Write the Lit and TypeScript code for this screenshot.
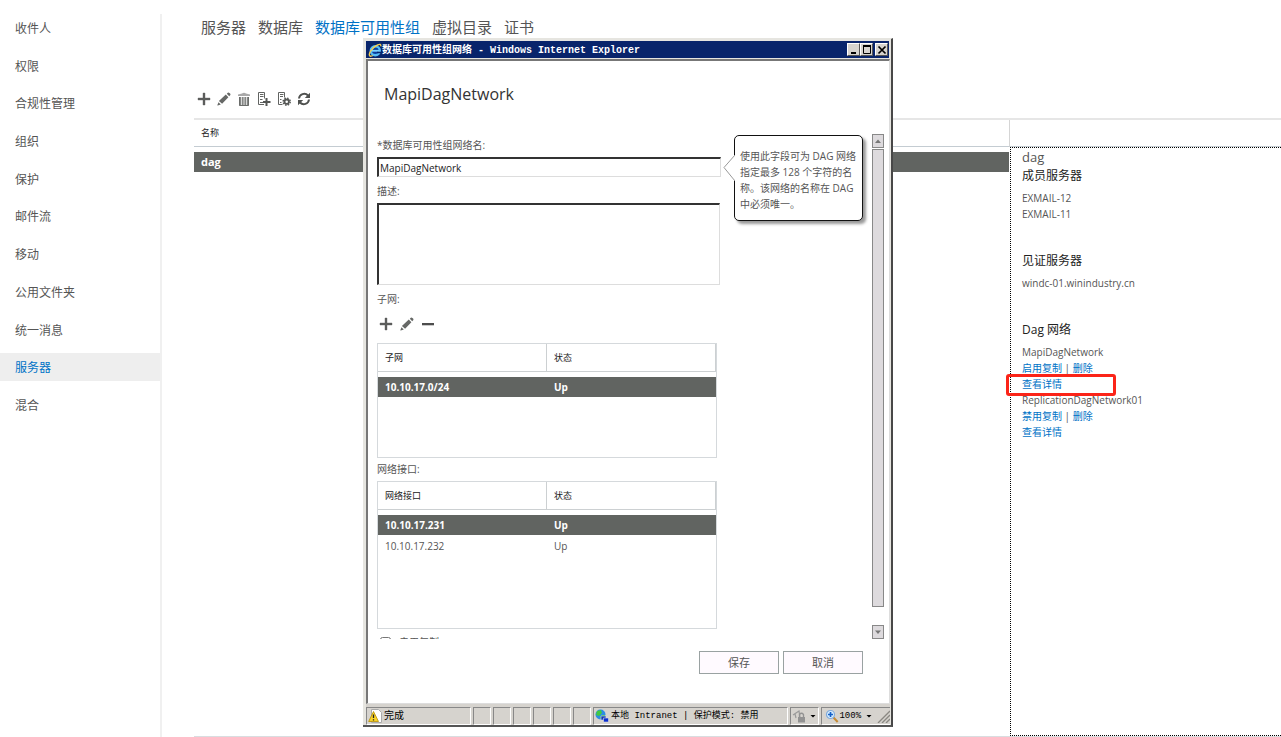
import { LitElement, html, css, svg, nothing } from "lit";
import { customElement, property } from "lit/decorators.js";
import { classMap } from "lit/directives/class-map.js";

const shapes: Record<string, unknown> = {
  add: svg`<path d="M6 1h2v5h5v2H8v5H6V8H1V6h5z" fill="#5b5d5b" stroke="#5b5d5b" stroke-width=".4"/>`,
  remove: svg`<path d="M1 6h12v2.300H1z" fill="#4d4d4d"/>`,
  edit: svg`<path d="M8.800 2.600l2.600 2.600-6.300 6.600-3.200-2.900zM9.800 1.700l1-.9q.8-.5 1.600.2l.7.6q.8.8.1 1.600l-1 1zM1.500 10.200l2.300 2.200-3 1.200q-.5 0-.4-.5z" fill="#666866"/>`,
  trash: svg`<path d="M5 1.500q2-1.500 4 0l4 1v1.500H1V2.500z" fill="#a8a8a8"/><path d="M2 5h10v8.500H2z" fill="#858785"/><path d="M4.500 5v8M7 5v8M9.500 5v8" stroke="#d9d9d9" stroke-width="1"/><path d="M2.500 5v8.500h9V5" fill="none" stroke="#6a6c6a"/>`,
  serverAdd: svg`<path d="M1.500.5h6v6M1.500.5v12h5.500" fill="none" stroke="#626462"/><path d="M3 2.500h3.500M3 4.500h3.500M3 7.500h2.500M3 10.500h3" stroke="#626462"/><path d="M9.500 6v8M6 10h7.500" stroke="#555755" stroke-width="2"/>`,
  serverGear: svg`<path d="M1.500.5h6v5M1.500.5v12h4" fill="none" stroke="#626462"/><path d="M3 2.500h3.500M3 4.500h3M3 7.500h1.500M3 10.500h1.500" stroke="#626462"/><circle cx="9.700" cy="9.700" r="2.200" fill="none" stroke="#555755" stroke-width="1.800"/><circle cx="9.700" cy="9.700" r="3.500" fill="none" stroke="#555755" stroke-width="1.500" stroke-dasharray="1.500 1.250"/>`,
  refresh: svg`<path d="M2 6.500A5.200 5.200 0 0 1 11 3.500M12 7.500A5.200 5.200 0 0 1 3 10.500" fill="none" stroke="#4f514f" stroke-width="2"/><path d="M13 .8v5.200H7.800zM1 13.200V8h5.200z" fill="#4f514f"/>`,
  ie: svg`<circle cx="7.300" cy="7.700" r="4.500" fill="#0b3f9e" stroke="#55bdf5" stroke-width="2.400"/><path d="M4 7.800h7.500" stroke="#7bd3ff" stroke-width="1.800"/><path d="M9 9.500h4" stroke="#08246b" stroke-width="1.500"/><path d="M12.800 3.400Q13.300.2 9.500 2 5 4 2.300 8.500.2 12.800 2.500 13.200q1.300 0 2.300-.7" fill="none" stroke="#f3cf54" stroke-width="1.400"/>`,
  minimize: svg`<path d="M4 10h5" stroke="#000" stroke-width="2"/>`,
  maximize: svg`<path d="M3.500 3v7.500h7V3z" fill="none" stroke="#000"/><path d="M3 3h8" stroke="#000" stroke-width="2"/>`,
  close: svg`<path d="M3.500 3.500l7 7M10.500 3.500l-7 7" stroke="#000" stroke-width="1.700"/>`,
  up: svg`<path d="M4 9h6L7 5.500z" fill="#777"/>`,
  down: svg`<path d="M4 5.500h6L7 9z" fill="#777"/>`,
  caret: svg`<path d="M4.500 6h5L7 8.500z" fill="#000"/>`,
  warn: svg`<path d="M3.500.5h7l3 3v10h-10z" fill="#fff" stroke="#aaa"/><path d="M5.500 2.500L.7 12.500h9.800z" fill="#f9d428" stroke="#b68d00" stroke-width=".8"/><path d="M5.500 5.500v3.600M5.500 10.200v1.300" stroke="#222" stroke-width="1.300"/>`,
  globe: svg`<circle cx="5.500" cy="5.500" r="5" fill="#2c8de4"/><path d="M2 2l4-1 1 3-3 3-3-1zM7 6l3 0-2 4-3-1z" fill="#42c943"/><path d="M6 7h5v4H6z" fill="#1239b4" stroke="#ddd" stroke-width=".6"/><path d="M8.500 9h5v4h-5z" fill="#0b2fd0" stroke="#ddd" stroke-width=".6"/>`,
  lock: svg`<path d="M1 6L7 2l1 7M3 5l1 4" fill="none" stroke="#9a9a9a" stroke-width="1.200"/><path d="M6 8h7v5.500H6z" fill="#929292"/><path d="M7.500 8V5.500q2-2.500 4 0V8" fill="none" stroke="#929292" stroke-width="1.300"/>`,
  zoom: svg`<path d="M8.500 8.500l4.200 4.500" stroke="#c58b35" stroke-width="2"/><circle cx="5.500" cy="5.500" r="4" fill="#d9efff" stroke="#7fa9da" stroke-width="1.200"/><path d="M5.500 3v5M3 5.500h5" stroke="#1560c8" stroke-width="1.700"/>`,
  grip: svg`<path d="M2 14L14 2M6 14l8-8M10 14l4-4" stroke="#8a8883" stroke-width="1.400"/>`,
};

const icon = (name: string) =>
  html`<svg class="icon" width="14" height="14" viewBox="0 0 14 14" aria-hidden="true">${shapes[name]}</svg>`;

const base = css`
  * { box-sizing: border-box; }
  :host { font-family: "Open Sans", "Noto Sans CJK SC", sans-serif; font-size: 10px; color: #555; }
  button { font: inherit; color: inherit; padding: 0; border: 0; background: none; }
  ul, h1, h2, p { margin: 0; padding: 0; font-weight: normal; list-style: none; }
  a { color: #0072c6; text-decoration: none; }
  .icon { display: block; flex: none; }
  .tools { display: flex; align-items: center; }
`;

@customElement("record-grid")
export class RecordGrid extends LitElement {
  @property({ attribute: false }) columns: string[] = [];
  @property({ attribute: false }) rows: string[][] = [];

  static styles = [base, css`
    :host { display: block; border: 1px solid #d5d9dc; }
    table { width: 100%; border-collapse: separate; border-spacing: 0; table-layout: fixed; }
    th { height: 28px; padding: 0 7px; font-size: 9px; font-weight: normal; text-align: left; color: #222;
      border-right: 1px solid #ccd0d2; border-bottom: 1px solid #ccd0d2; }
    .space td { height: 5px; padding: 0; }
    td { height: 22px; padding: 0 7px; line-height: 20px; }
    .selected td { height: 20px; background: #616461; color: #fff; font-weight: bold; }
  `];

  render() {
    return html`<table>
      <thead><tr>${this.columns.map((c) => html`<th scope="col">${c}</th>`)}</tr></thead>
      <tbody>
        <tr class="space"><td colspan=${this.columns.length}></td></tr>
        ${this.rows.map((r, i) => html`<tr class=${classMap({ selected: i === 0 })}>${r.map((v) => html`<td>${v}</td>`)}</tr>`)}
      </tbody>
    </table>`;
  }
}

@customElement("network-window")
export class NetworkWindow extends LitElement {
  static styles = [base, css`
    :host { display: flex; flex-direction: column; background: #e6e5e0; padding: 2px 1px 0 3px;
      border-right: 2px solid #484848; border-bottom: 2px solid #555; border-top: 1px solid #e6e5e0; }
    .bar { display: flex; align-items: center; height: 17px; margin-right: 1px; padding: 0 1px 0 2px; background: #08246b; color: #fff; }
    .caption { flex: 1; padding-top: 2px; font: bold 10px/15px "Liberation Mono", "Noto Sans CJK SC", monospace; white-space: pre; }
    .bar button { display: flex; align-items: center; justify-content: center; width: 13px; height: 13px; background: #d6d3ce;
      border: 1px solid #fff; border-right-color: #555; border-bottom-color: #555; overflow: hidden; }
    .bar .last { margin-left: 2px; }
    .page { flex: 1; min-height: 0; display: flex; flex-direction: column; background: #fff; margin-top: 1px;
      border: 1px solid #ddd; border-top: 2px solid #777; border-left: 2px solid #777; }
    h1 { padding: 20px 0 0 16px; font-size: 16px; line-height: 26px; color: #333; }
    .body { display: flex; flex: 1; min-height: 0; margin-top: 27px; padding: 0 5px 0 9px; }
    form { width: 344px; overflow: hidden; }
    .label { display: block; line-height: 23px; height: 23px; }
    .field { display: block; width: 100%; border: 1px solid #ddd; border-top: 2px solid #333; border-left: 2px solid #333;
      margin: 0; background: #fff; font: 10px "Open Sans", sans-serif; color: #222; outline: none; border-radius: 0; }
    input.field { height: 20px; padding: 0 1px; }
    textarea.field { width: 343px; height: 82px; resize: none; }
    .tools { gap: 7px; height: 26px; padding: 0 0 0 2px; }
    .tall { height: 26px; line-height: 28px; }
    record-grid { width: 340px; height: 115px; margin-top: 6px; }
    .interfaces { height: 148px; margin-top: 0; }
    .check { display: flex; align-items: center; gap: 8px; height: 26px; line-height: 26px; }
    .check input { width: 11px; height: 11px; margin: 0 0 0 3px; }
    .side { flex: 1; padding: 1px 9px 0 13px; }
    .tip { position: relative; padding: 12px 5px 9px 5px; border: 1px solid #111; border-radius: 5px; background: #fff;
      box-shadow: 3px 3px 3px #999; line-height: 16px; height: 86px; }
    .pointer { position: absolute; left: -12px; top: 18px; }
    .scroll { display: flex; flex-direction: column; width: 12px; }
    .scroll button, .thumb { border: 1px solid #888; background: #dddadd; }
    .scroll button { display: flex; align-items: center; justify-content: center; height: 14px; }
    .thumb { flex: 1; margin: 1px 0 18px; }
    .actions { display: flex; justify-content: flex-end; gap: 4px; padding: 12px 26px 29px; }
    .actions button { width: 80px; height: 23px; border: 1px solid #9aa2a2; background: #fffaff; font-size: 11px; line-height: 20px; }
    .status { display: flex; gap: 2px; height: 21px; padding-top: 3px; color: #000; background: #d6d3ce;
      font: 9px/15px "Liberation Mono", "Noto Sans CJK SC", monospace; }
    .cell { display: flex; align-items: center; gap: 2px; width: 18px; white-space: pre; padding: 0 1px;
      border: 1px solid #fff; border-top-color: #888; border-left-color: #888; }
    .done { width: 105px; }
    .zone { width: 195px; }
    .guard { width: 29px; gap: 0; }
    .zoom { flex: 1; gap: 0; padding: 0 0 0 3px; justify-content: space-between; border-right: 0; }
    .cjk { font-size: 10px; }
  `];

  render() {
    return html`
      <header class="bar">
        ${icon("ie")}<span class="caption">数据库可用性组网络 - Windows Internet Explorer</span>
        <button aria-label="最小化">${icon("minimize")}</button>
        <button aria-label="最大化">${icon("maximize")}</button>
        <button class="last" aria-label="关闭">${icon("close")}</button>
      </header>
      <div class="page">
        <h1>MapiDagNetwork</h1>
        <div class="body">
          <form>
            <label class="label" for="name">*数据库可用性组网络名:</label>
            <input class="field" id="name" type="text" .value=${"MapiDagNetwork"} />
            <label class="label tall" for="about">描述:</label>
            <textarea class="field" id="about"></textarea>
            <span class="label tall">子网:</span>
            <div class="tools">
              ${[["add", "添加"], ["edit", "编辑"], ["remove", "删除"]].map(([i, t]) => html`<button type="button" aria-label=${t}>${icon(i)}</button>`)}
            </div>
            <record-grid .columns=${["子网", "状态"]} .rows=${[["10.10.17.0/24", "Up"]]}></record-grid>
            <span class="label">网络接口:</span>
            <record-grid class="interfaces" .columns=${["网络接口", "状态"]} .rows=${[["10.10.17.231", "Up"], ["10.10.17.232", "Up"]]}></record-grid>
            <label class="check"><input type="checkbox" />启用复制</label>
          </form>
          <div class="side">
            <p class="tip" role="tooltip">
              <svg class="pointer" width="12" height="28" viewBox="0 0 12 28" aria-hidden="true"><path d="M12 1L1 13.500 12 27" fill="#fff" stroke="#999"/></svg>使用此字段可为 DAG 网络指定最多 128 个字符的名称。该网络的名称在 DAG 中必须唯一。</p>
          </div>
          <div class="scroll">
            <button aria-label="向上滚动">${icon("up")}</button>
            <div class="thumb"></div>
            <button aria-label="向下滚动">${icon("down")}</button>
          </div>
        </div>
        <div class="actions"><button>保存</button><button>取消</button></div>
      </div>
      <footer class="status">
        <div class="cell done">${icon("warn")}<span class="cjk">完成</span></div>
        ${[1, 2, 3, 4, 5, 6].map(() => html`<div class="cell"></div>`)}
        <div class="cell zone">${icon("globe")}<span>本地 Intranet | 保护模式: 禁用</span></div>
        <div class="cell guard">${icon("lock")}${icon("caret")}</div>
        <div class="cell zoom">${icon("zoom")}<span>100%</span>${icon("caret")}${icon("grip")}</div>
      </footer>`;
  }
}

const sections = ["收件人", "权限", "合规性管理", "组织", "保护", "邮件流", "移动", "公用文件夹", "统一消息", "服务器", "混合"];
const tabs = ["服务器", "数据库", "数据库可用性组", "虚拟目录", "证书"];
const commands = [["add", "添加"], ["edit", "编辑"], ["trash", "删除"], ["serverAdd", "添加网络"], ["serverGear", "管理成员"], ["refresh", "刷新"]];
const networks = [
  { name: "MapiDagNetwork", action: "启用复制", marked: true },
  { name: "ReplicationDagNetwork01", action: "禁用复制", marked: false },
];

@customElement("app-root")
export class AppRoot extends LitElement {
  static styles = [base, css`
    :host { display: flex; position: relative; min-height: 100vh; background: #fff; overflow: hidden; }
    .nav { width: 162px; padding-top: 14px; display: flex; }
    .nav ul { flex: 1; display: flex; flex-direction: column; justify-content: space-between; height: 405px; }
    .rule { width: 2px; background: #f0f0f0; }
    .nav a { display: block; height: 28px; padding-left: 15px; font-size: 12px; line-height: 30px; color: #555; }
    .nav .current { color: #0072c6; background: #eee; }
    main { flex: 1; display: flex; flex-direction: column; margin-left: 32px; border-bottom: 1px solid #d9dde0; }
    .tabs { display: flex; gap: 12px; padding: 15px 0 1px 7px; font-size: 15px; line-height: 24px; }
    .tabs a { color: #555; }
    .tabs .current { color: #0072c6; }
    .tools { height: 78px; padding: 39px 0 0 3px; gap: 6px; }
    .split { flex: 1; display: grid; grid-template-columns: 1fr 272px; border-top: 2px solid #e6e6e6; }
    table { width: 100%; border-collapse: separate; border-spacing: 0; }
    th { height: 27px; padding: 0 7px 2px; font-size: 9px; font-weight: normal; text-align: left; color: #222; border-bottom: 1px solid #c4ccd2; }
    .space td { height: 5px; padding: 0; }
    .selected td { height: 20px; padding: 0 7px; font-size: 11px; line-height: 20px; font-weight: bold; color: #fff; background: #616461; }
    .side { display: flex; flex-direction: column; }
    .head { height: 27px; border-left: 1px solid #d5d5d5; border-bottom: 1px solid #c4ccd2; }
    .details { flex: 1; margin-left: 1px; padding-left: 11px; border: 1px dotted #000; border-right: 0; line-height: 16px; }
    .name { font-size: 13px; line-height: 19px; }
    h2 { font-size: 12px; line-height: 18px; color: #222; margin-bottom: 5px; }
    section { margin-bottom: 30px; }
    .line { position: relative; }
    .mark { position: absolute; left: -16px; top: -2px; width: 110px; height: 22px; border: 3px solid #fb2418; border-radius: 3px; }
    network-window { position: absolute; left: 363px; top: 38px; width: 530px; height: 689px; }
  `];

  render() {
    return html`
      <nav class="nav">
        <ul>${sections.map((s) => html`<li><a href="#" class=${classMap({ current: s === "服务器" })}>${s}</a></li>`)}</ul>
        <div class="rule"></div>
      </nav>
      <main>
        <div class="tabs">${tabs.map((t, i) => html`<a href="#" class=${classMap({ current: i === 2 })}>${t}</a>`)}</div>
        <div class="tools">${commands.map(([i, t]) => html`<button aria-label=${t}>${icon(i)}</button>`)}</div>
        <div class="split">
          <div>
            <table>
              <thead><tr><th scope="col">名称</th></tr></thead>
              <tbody><tr class="space"><td></td></tr><tr class="selected"><td>dag</td></tr></tbody>
            </table>
          </div>
          <div class="side">
            <div class="head"></div>
            <div class="details">
              <p class="name">dag</p>
              <section><h2>成员服务器</h2><p>EXMAIL-12</p><p>EXMAIL-11</p></section>
              <section><h2>见证服务器</h2><p>windc-01.winindustry.cn</p></section>
              <section>
                <h2>Dag 网络</h2>
                ${networks.map((n) => html`
                  <p>${n.name}</p>
                  <p><a href="#">${n.action}</a> | <a href="#">删除</a></p>
                  <p class="line"><a href="#">查看详情</a>${n.marked ? html`<span class="mark"></span>` : nothing}</p>`)}
              </section>
            </div>
          </div>
        </div>
      </main>
      <network-window></network-window>`;
  }
}
